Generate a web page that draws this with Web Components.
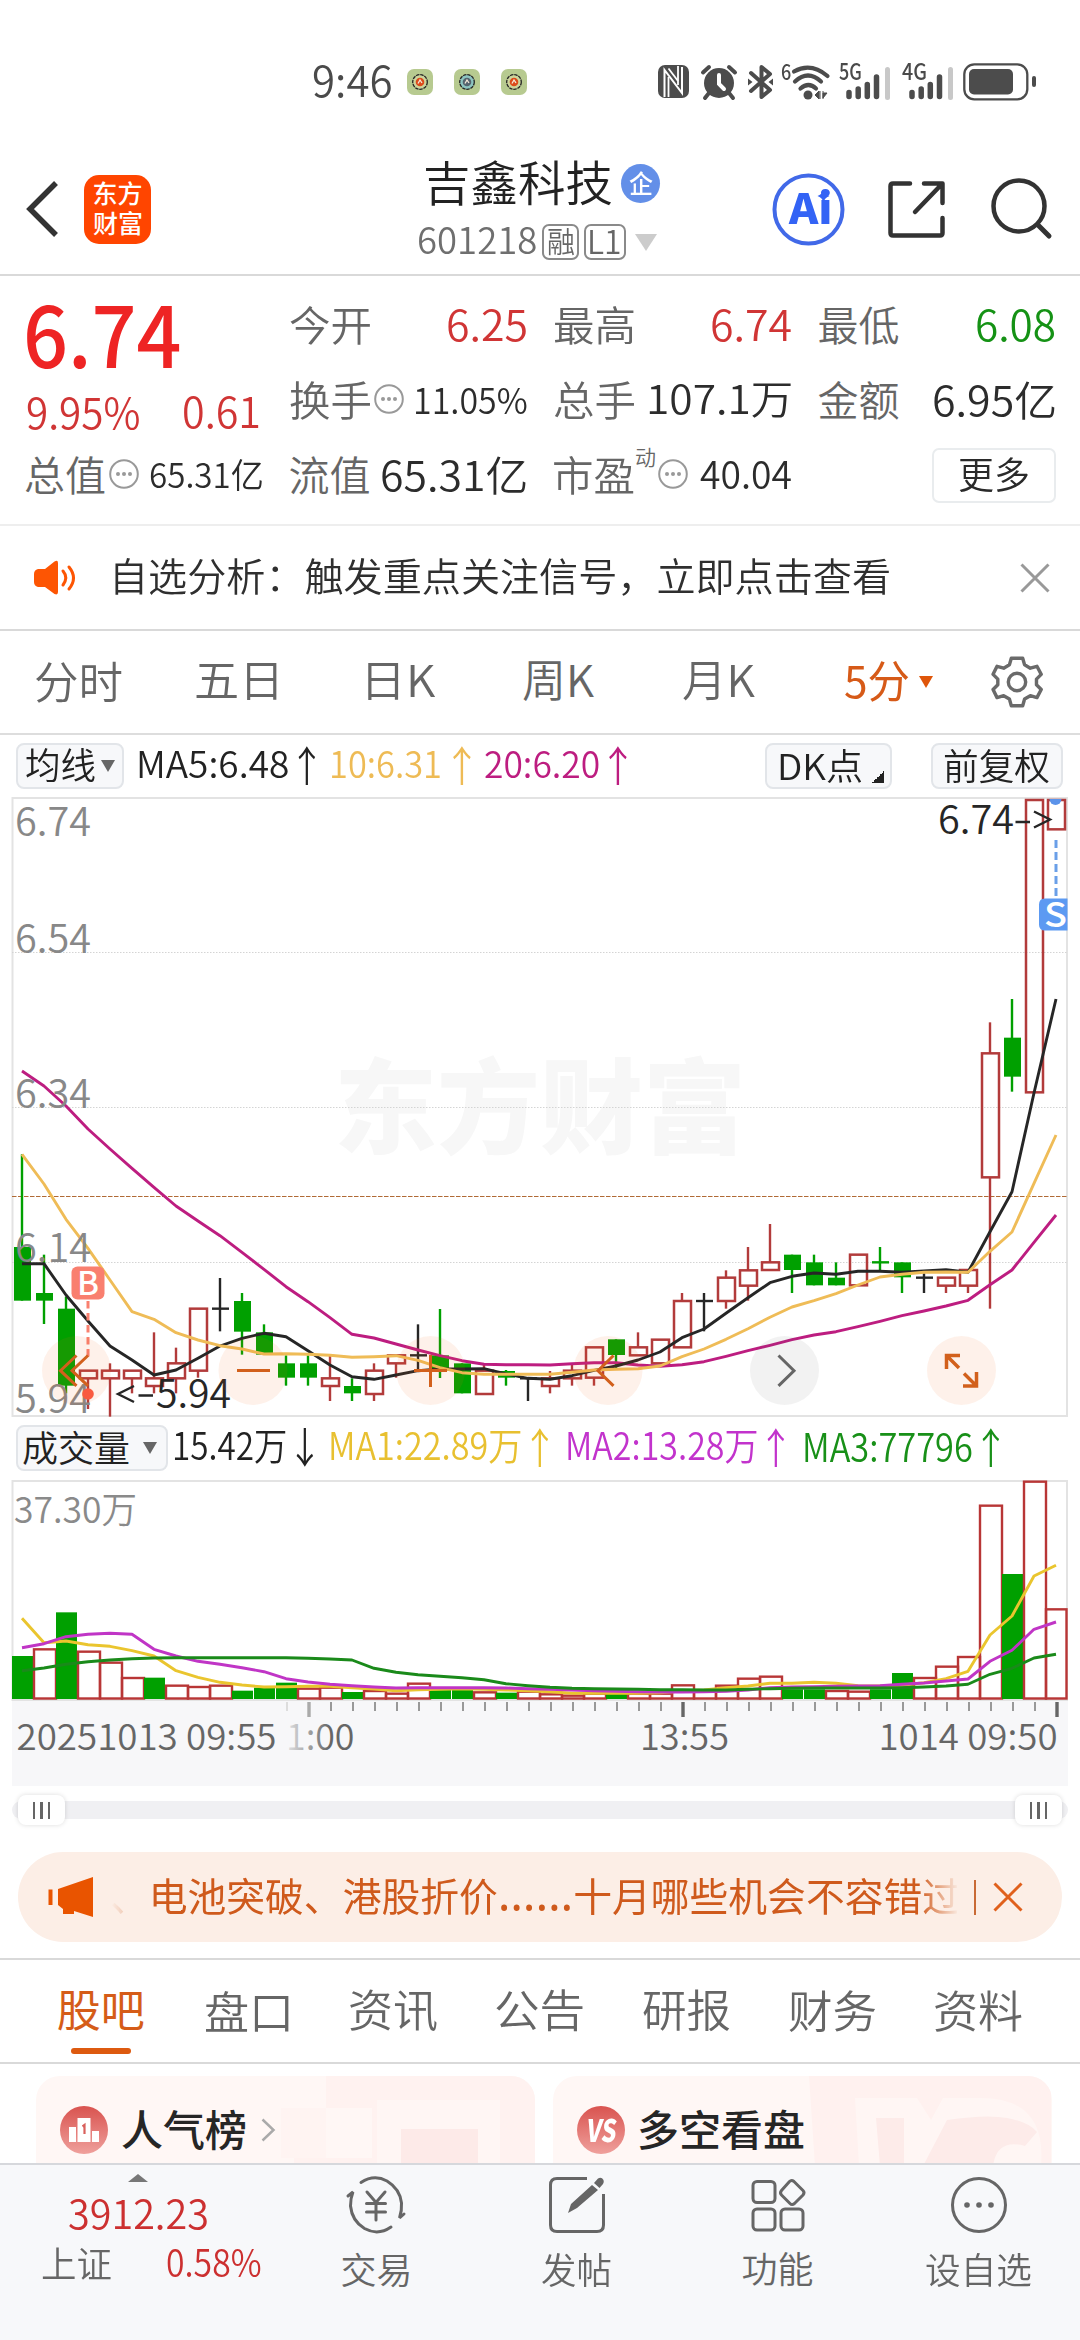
<!DOCTYPE html>
<html lang="zh-CN">
<head>
<meta charset="utf-8">
<title>吉鑫科技 601218</title>
<style>
html,body{margin:0;padding:0;background:#fff}
body{width:1080px;height:2340px;overflow:hidden;font-family:"Noto Sans CJK SC","Noto Sans",sans-serif;color:#2a2a2a}
</style>
</head>
<body>
<stock-app></stock-app>
<script>
const FAMILY = '"Noto Sans CJK SC","Noto Sans",sans-serif';
const pen = document.createElement('canvas').getContext('2d');
const define = (name, html, after) => customElements.define(name, class extends HTMLElement {
  connectedCallback() {
    if (this.shadowRoot) return;
    this.attachShadow({mode: 'open'}).innerHTML = typeof html === 'function' ? html(this) : html;
    if (after) after(this);
  }
});

/* Text whose box is exactly its ink: s = font size, w = ink width, b = weight */
define('fit-text', el => {
  const s = +el.getAttribute('s'), b = el.getAttribute('b') || 350, w = +el.getAttribute('w');
  const t = el.textContent;
  pen.font = `${b} ${s}px ${FAMILY}`;
  const m = pen.measureText(t);
  const ink = m.actualBoundingBoxLeft + m.actualBoundingBoxRight;
  const k = w ? w / ink : 1;
  const up = m.actualBoundingBoxAscent, down = m.actualBoundingBoxDescent;
  return `<style>
  :host{display:flow-root;flex:none;width:${(ink * k).toFixed(2)}px;height:${(up + down).toFixed(2)}px;white-space:nowrap}
  span{display:block;width:max-content;font:${b} ${s}px/${s}px ${FAMILY};transform-origin:0 0;transform:scaleX(${k.toFixed(4)});
  margin:${(up - s * .936).toFixed(2)}px 0 0 ${(m.actualBoundingBoxLeft * k).toFixed(2)}px}
  </style><span><slot></slot></span>`;
});

const T = (t, s, w, x = '') => `<fit-text s="${s}" w="${w}" ${x}>${t}</fit-text>`;
const ml = (n, c) => `style="margin-left:${n}px${c ? ';color:' + c : ''}"`;

const ICONS = {
  nfc: [32, 34, `<rect x="0" y="0" width="31" height="33" rx="7" fill="#4c4c4c"/><path d="M6.500 32V5l17.500 23V2" fill="none" stroke="#fff" stroke-width="2"/><path d="M10.500 32V12M20 20V1" stroke="#fff" stroke-width="1.800"/><path d="M10.500 3.500L20 16" stroke="#fff" stroke-width="1.800"/>`],
  alarm: [36, 34, `<circle cx="18" cy="18" r="15" fill="#4c4c4c"/><path d="M2 7.500l6-5.500M34 7.500l-6-5.500M8 28l-4 5M28 28l4 5" stroke="#4c4c4c" stroke-width="4" stroke-linecap="round"/><path d="M18 10v9l5 5" fill="none" stroke="#fff" stroke-width="4" stroke-linecap="round"/>`],
  bt: [26, 36, `<path d="M3 9l19 17-8.500 7V3L22 10 3 27" fill="none" stroke="#4c4c4c" stroke-width="4" stroke-linejoin="round" stroke-linecap="round"/><path d="M0 14.500l4.500 3.500L0 21.500zM25 14.500L20.500 18l4.500 3.500z" fill="#4c4c4c"/>`],
  wifi: [48, 36, `<g fill="none" stroke="#4c4c4c" stroke-width="4.200" stroke-linecap="round"><path d="M12 7.500Q29-2 45.500 12"/><path d="M13 17.500q13-12 26 0"/><path d="M18.500 24.500q8-7 15.500 0"/></g><circle cx="26" cy="31" r="4.500" fill="#4c4c4c"/><path d="M33 31l4-4v8zM38 27l0 8M41 27v8M45 29h-4l0 5z" fill="#4c4c4c" stroke="#4c4c4c"/>`],
  signal: [44, 26, `<g stroke-width="5.500" stroke-linecap="round" stroke="#4c4c4c"><path d="M3 18.500v4M12.200 15v7.500M21.300 10.500v12M30.500 3v19.500"/></g>`],
  battery: [74, 38, `<rect x="1.300" y="1.300" width="63" height="35" rx="10" fill="none" stroke="#4c4c4c" stroke-width="2.300"/><rect x="6" y="6" width="44" height="25.500" rx="5" fill="#4c4c4c"/><rect x="69" y="13" width="4" height="11" rx="2" fill="#4c4c4c"/>`],
  back: [34, 58, `<path d="M30 3L4 29l26 26" fill="none" stroke="#333" stroke-width="5.500"/>`],
  ai: [73, 73, `<rect x="43" y="13" width="17" height="15.500" fill="#fff"/><circle cx="36.500" cy="36.500" r="34" fill="none" stroke="#4169e8" stroke-width="4"/><path d="M51.500 17q1.500 4.500 6 6-4.500 1.500-6 6-1.500-4.500-6-6 4.500-1.500 6-6z" fill="#3363f5"/>`],
  share: [60, 60, `<g fill="none" stroke="#333" stroke-width="4.500" stroke-linecap="round" stroke-linejoin="round"><path d="M23 4.500H6Q3.500 4.500 3.500 7v47q0 2.500 2.500 2.500h47q2.500 0 2.500-2.500V39M37 4.500h18.500V24M54 6L28 33"/></g>`],
  search: [60, 62, `<circle cx="28" cy="28" r="25.500" fill="none" stroke="#333" stroke-width="4.500"/><path d="M47 47l11 11" stroke="#333" stroke-width="5" stroke-linecap="round"/>`],
  dots: [30, 30, `<circle cx="15" cy="15" r="13.800" fill="none" stroke="#999" stroke-width="2"/><g fill="#999"><circle cx="9" cy="15" r="2"/><circle cx="15" cy="15" r="2"/><circle cx="21" cy="15" r="2"/></g>`],
  speaker: [45, 36, `<path d="M4 9h7L20.500 1.500Q24-.5 24 3v29q0 3.500-3.500 2L11 27H4q-4-1-4-5v-8q0-4 4-5z" fill="#fd5503"/><path d="M29 11q5.500 6.500 0 14M35 7q9 11 0 22" fill="none" stroke="#fd5503" stroke-width="3" stroke-linecap="round"/>`],
  close: [30, 30, `<path d="M1.500 1.500l27 27M28.500 1.500l-27 27" stroke="currentColor" stroke-width="3"/>`],
  gear: [52, 54, `<path d="M20 2h12l2 7 6 3.500 7-2 4.500 8.500-5 5v6l5 5L47 43.500l-7-2L34 45l-2 7H20l-2-7-6-3.500-7 2L.8 35l5-5v-6l-5-5L5 10.500l7 2L18 9z" transform="translate(1.300 1.300) scale(.95)" fill="none" stroke="#6a6a6a" stroke-width="3.600" stroke-linejoin="round"/><circle cx="26" cy="27" r="8.700" fill="none" stroke="#6a6a6a" stroke-width="3.400"/>`],
  horn: [46, 40, `<path d="M10 12L45 0v40L26 34v3H15v-5l-5-4z" fill="#e95400"/><path d="M2.500 12.500V28" stroke="#e95400" stroke-width="4"/>`],
  chev: [15, 24, `<path d="M1.500 1.500L12.500 12 1.500 22.500" fill="none" stroke="#aaa" stroke-width="2.500"/>`],
  rank: [48, 48, `<defs><linearGradient id="g" x1="0" y1="0" x2="0" y2="1"><stop offset="0" stop-color="#d9534f"/><stop offset="1" stop-color="#efa09c"/></linearGradient></defs><circle cx="24" cy="24" r="24" fill="url(#g)"/><path d="M9 36V21h7v15zM17.500 36V12h13v24zM32 36V25h7v11z" fill="#fff"/><path d="M22.500 20.500l2-1.500v9" fill="none" stroke="#d9605c" stroke-width="2.200"/>`],
  vs: [48, 48, `<defs><linearGradient id="g" x1="0" y1="0" x2="0" y2="1"><stop offset="0" stop-color="#d9534f"/><stop offset="1" stop-color="#efa09c"/></linearGradient></defs><circle cx="24" cy="24" r="24" fill="url(#g)"/>`],
  trade: [66, 60, `<g fill="none" stroke="#666" stroke-width="3" stroke-linecap="round"><path d="M18 7.500Q31-1 44 6q13 8 14.500 22 .5 8-2 15l4.500-4M48 52q-13 9-26.500 1.500Q9 46 7.500 31q0-8 2.500-14l-5 4"/><path d="M24 17l9 10.500L42 17M23.500 28.500h19M23.500 37h19M33 28.500V45"/></g>`],
  post: [58, 58, `<path d="M39 2.500H9Q2.500 2.500 2.500 9v40Q2.500 55.500 9 55.500h40q6.500 0 6.500-6.500V18" fill="none" stroke="#666" stroke-width="3"/><path d="M20 37l3-9L44 9l6 5-21 18zM46 7l4-4.500q3.500-2 5.500 1.500.8 2-.5 4L51.500 12z" fill="#666"/>`],
  apps: [54, 54, `<g fill="none" stroke="#666" stroke-width="3"><rect x="2" y="3.500" width="22" height="21" rx="4"/><rect x="2" y="31" width="22" height="21" rx="4"/><rect x="30" y="31" width="22" height="21" rx="4"/><path d="M38.500 3.500q2-2 4.500 0l9 9q2 2 0 4.500l-8.500 8.500q-2.500 2-4.500 0L30.500 17q-2-2 0-4.500z"/></g>`],
  more: [58, 58, `<circle cx="29" cy="29" r="26.500" fill="none" stroke="#666" stroke-width="3"/><g fill="#666"><circle cx="17" cy="29" r="2.800"/><circle cx="29" cy="29" r="2.800"/><circle cx="41" cy="29" r="2.800"/></g>`],
};
define('ui-icon', el => {
  const [w, h, body] = ICONS[el.getAttribute('name')];
  return `<style>:host{display:block;flex:none;width:${w}px;height:${h}px}svg{display:block;overflow:visible}</style><svg width="${w}" height="${h}" viewBox="0 0 ${w} ${h}">${body}</svg>`;
});

define('notice-dot', el => `<style>
:host{display:grid;place-items:center;width:26px;height:26px;border-radius:7px;background:#b7ca90;margin-right:21px}
svg{display:block}</style><svg width="18" height="18" viewBox="0 0 18 18"><circle cx="9" cy="9" r="7.300" fill="${el.getAttribute('bg')}" stroke="#262626" stroke-width="1.300" stroke-dasharray="3.500 .8"/><circle cx="9" cy="9" r="4.300" fill="${el.getAttribute('c')}"/><path d="M7 10.500l2-3.500 2 3" fill="none" stroke="#f4e7d8" stroke-width="1.300"/></svg>`);

define('status-bar', `<style>
:host{display:flex;height:164px;align-items:center;padding-left:313px;box-sizing:border-box;color:#4a4a4a}
.dots{display:flex;margin-left:16px}
.sim{display:grid;width:50px;height:36px}
.sim>*{grid-area:1/1}
.sim ui-icon{align-self:end;margin-left:7px}
.bar{align-self:end;justify-self:end;width:5px;height:33px;border-radius:3px;background:#c8c8c8}
</style>
${T('9:46', 43, 78)}
<div class="dots"><notice-dot c="#dc4a1a" bg="#cdd49c"></notice-dot><notice-dot c="#54636e" bg="#8cc4c0"></notice-dot><notice-dot c="#dc4a1a" bg="#cdd49c"></notice-dot></div>
<ui-icon name="nfc" ${ml(110)}></ui-icon>
<ui-icon name="alarm" ${ml(11)}></ui-icon>
<ui-icon name="bt" ${ml(11)}></ui-icon>
<div class="sim" style="margin-left:8px;width:50px">${T('6', 22, 9, 'b="500"')}<ui-icon name="wifi" style="margin-left:0"></ui-icon></div>
<div class="sim" style="margin-left:7px">${T('5G', 23, 22, 'b="500"')}<ui-icon name="signal"></ui-icon><div class="bar"></div></div>
<div class="sim" style="margin-left:13px">${T('4G', 23, 24, 'b="500"')}<ui-icon name="signal"></ui-icon><div class="bar"></div></div>
<ui-icon name="battery" ${ml(11)}></ui-icon>`);

define('app-logo', `<style>
:host{display:flex;flex-direction:column;align-items:center;justify-content:center;gap:5px;width:67px;height:69px;border-radius:15px;background:#ff4500;color:#fff}
</style>${T('东方', 25, 48, 'b="500"')}${T('财富', 25, 49, 'b="500"')}`);

define('top-bar', `<style>
:host{display:flex;height:112px;align-items:flex-start;padding-left:26px;border-bottom:2px solid #d9d9d9;box-sizing:border-box}
.mid{display:flex;height:90px;align-items:center}
.row{display:flex;align-items:center}
.badge{display:grid;place-items:center;width:39px;height:39px;border-radius:50%;background:#638fe8;color:#fff;margin-left:9px}
.tag{display:grid;place-items:center;box-sizing:border-box;height:36px;border:2px solid #8a8a8a;border-radius:7px;color:#666}
.down{border:11px solid transparent;border-top:17px solid #ccc;border-bottom:0}
.ai{display:grid;place-items:center;color:#3363f5}
.ai>*{grid-area:1/1}
</style>
<div class="mid">
<ui-icon name="back"></ui-icon>
<app-logo style="margin-left:24px"></app-logo>
<div style="margin:2px 0 0 268px;width:241px">
<div class="row" style="margin-left:7px;height:46px">${T('吉鑫科技', 48, 186, 'style="color:#222"')}<div class="badge">${T('企', 25, 24, 'b="500"')}</div></div>
<div class="row" style="margin-top:18px;color:#6f6f6f">${T('601218', 37, 117)}
<div class="tag" style="width:37px;margin-left:6px">${T('融', 29, 26)}</div>
<div class="tag" style="width:42px;margin-left:5px">${T('L1', 32, 30)}</div><div class="down" style="margin-left:9px"></div></div>
</div>
<div class="ai" style="margin-left:112px">${T('Ai', 42, 42, 'b="900" style="margin:-4px 0 0 0"')}<ui-icon name="ai"></ui-icon></div>
<ui-icon name="share" ${ml(42)}></ui-icon>
<ui-icon name="search" ${ml(44)}></ui-icon>
</div>`);

define('quote-cell', el => {
  const a = n => el.getAttribute(n);
  return `<style>
:host{display:flex;align-items:center;height:75px}
.sup{align-self:flex-start;margin:10px 0 0 2px}
fit-text.l,.sup{color:#666}
</style>${T(a('label'), 41, a('lw') || 80, 'class="l"')}${a('sup') ? `<div class="sup">${T(a('sup'), 21, 19)}</div>` : ''}
${a('dots') ? `<ui-icon name="dots" style="margin:-4px 0 0 ${a('dots')}px"></ui-icon>` : ''}
${T(a('value'), a('s') || 42, a('vw'), `style="margin-left:auto;margin-top:1px;color:${a('c') || '#2c2c2c'}"`)}`;
});

define('quote-panel', `<style>
:host{display:grid;grid-template-columns:237px 237px 237px 237px;column-gap:27.500px;height:250px;padding:12px 0 0 25px;box-sizing:border-box;border-bottom:2px solid #eee;align-content:start}
.price{grid-row:1/3;height:150px;padding:20px 0 0 2px;box-sizing:border-box}
.chg{display:flex;justify-content:space-between;width:232px;margin-top:27px;color:#d03535}
.more{display:grid;place-items:center;justify-self:end;align-self:center;width:124px;height:55px;box-sizing:border-box;border:2px solid #e9ecee;border-radius:7px}
</style>
<div class="price">${T('6.74', 84, 153, 'b="500" style="color:#ee2424"')}<div class="chg">${T('9.95%', 42, 112)}${T('0.61', 42, 75)}</div></div>
<quote-cell label="今开" value="6.25" vw="78" c="#d03535"></quote-cell>
<quote-cell label="最高" value="6.74" vw="79" c="#d03535"></quote-cell>
<quote-cell label="最低" value="6.08" vw="78" c="#159215"></quote-cell>
<quote-cell label="换手" dots="4" value="11.05%" s="36" vw="111"></quote-cell>
<quote-cell label="总手" value="107.1万" s="40" vw="142"></quote-cell>
<quote-cell label="金额" value="6.95亿" s="41" vw="121"></quote-cell>
<quote-cell label="总值" dots="4" value="65.31亿" s="34" vw="112"></quote-cell>
<quote-cell label="流值" value="65.31亿" s="41" vw="144"></quote-cell>
<quote-cell label="市盈" sup="动" dots="3" value="40.04" s="38" vw="91"></quote-cell>
<div class="more">${T('更多', 37, 69)}</div>`);

define('notice-row', `<style>
:host{display:flex;height:105px;align-items:center;padding-left:34px;box-sizing:border-box;border-bottom:2px solid #d9d9d9}
</style><ui-icon name="speaker"></ui-icon>${T('自选分析：触发重点关注信号，立即点击查看', 39, 774, ml(36, '#2f2f2f'))}
<ui-icon name="close" ${ml(131, '#999')}></ui-icon>`);

define('period-tabs', `<style>
:host{display:flex;height:104px;align-items:center;padding-left:36px;box-sizing:border-box;border-bottom:2px solid #ddd;color:#666}
.tri{border:7.500px solid transparent;border-top:12px solid #df560a;border-bottom:0;margin-left:10px}
</style>${T('分时', 44, 86)}${T('五日', 44, 81, ml(74))}${T('日K', 44, 68, ml(90))}${T('周K', 44, 71, ml(88))}${T('月K', 44, 72, ml(89))}
${T('5分', 44, 64, 'b="400" ' + ml(90, '#d65a18'))}<div class="tri"></div><ui-icon name="gear" ${ml(58)}></ui-icon>`);

define('pill-btn', `<style>
:host{display:flex;align-items:center;flex:none;box-sizing:border-box;height:46px;border:2px solid #e2e5e9;border-radius:8px;background:#f7f8fa;color:#222}
</style><slot></slot>`);

const TRI = (m, c = '#666') => `<i style="border:7px solid transparent;border-top:12px solid ${c};border-bottom:0;margin-left:${m}px"></i>`;
define('ma-row', `<style>
:host{display:flex;height:61px;align-items:center;padding:0 0 0 16px;box-sizing:border-box;color:#222}
.corner{width:12px;height:12px;background:linear-gradient(135deg,transparent 50%,#222 50%);margin:22px 0 0 10px}
</style>
<pill-btn style="width:108px;padding-left:8px">${T('均线', 36, 69)}${TRI(6)}</pill-btn>
${T('MA5:6.48', 37, 149, ml(15))}${T('↑', 42, 17, ml(10))}
${T('10:6.31', 37, 108, ml(17, '#eebb55'))}${T('↑', 42, 18, ml(13, '#eebb55'))}
${T('20:6.20', 37, 114, ml(14, '#bd1d80'))}${T('↑', 42, 18, ml(10, '#bd1d80'))}
<pill-btn style="width:127px;padding-left:13px;margin-left:138px">${T('DK点', 36, 82)}<div class="corner"></div></pill-btn>
<pill-btn style="width:132px;padding-left:11px;margin-left:39px">${T('前复权', 36, 105)}</pill-btn>`);

define('vol-row', `<style>
:host{display:flex;height:62px;align-items:center;padding:0 0 2px 16px;box-sizing:border-box;color:#222}
</style>
<pill-btn style="width:152px;padding-left:5px">${T('成交量', 36, 106)}${TRI(14)}</pill-btn>
${T('15.42万', 38, 111, ml(7))}${T('↓', 42, 17, ml(10))}
${T('MA1:22.89万', 38, 190, ml(18, '#e8c030'))}${T('↑', 42, 17, ml(10, '#e8c030'))}
${T('MA2:13.28万', 38, 189, ml(20, '#c233cc'))}${T('↑', 42, 17, ml(10, '#c233cc'))}
${T('MA3:77796', 39, 167, ml(21, '#189018'))}${T('↑', 42, 17, ml(10, '#189018'))}`);

/* kind, body top, body bottom, wick top, wick bottom; y = 1110 + v / 3 */
const K = [
['g',411,572,133,572],['g',549,572,434,642],['g',596,827,560,850],['r',782,805,782,897],['r',782,805,760,920],['r',782,805,782,850],
['r',805,828,667,850],['r',760,805,713,850],['r',596,782,596,803],['b',596,596,504,664],['g',573,665,549,734],['g',667,734,643,734],
['g',760,803,736,827],['g',760,803,736,827],['r',805,828,738,873],['g',828,850,805,873],['r',782,852,760,873],['r',736,760,736,803],
['b',736,736,643,782],['g',736,780,597,804],['g',760,850,760,850],['r',782,852,765,852],['g',783,803,780,827],['b',805,805,805,873],
['r',805,828,783,850],['r',782,805,760,827],['r',712,803,712,827],['g',688,735,688,774],['r',712,736,667,736],['r',689,760,689,760],
['r',573,712,549,712],['b',573,573,549,664],['r',503,573,481,596],['r',481,527,411,572],['r',457,480,342,480],['g',434,480,434,549],
['g',457,526,434,526],['g',503,526,457,526],['r',434,526,434,526],['g',457,457,411,482],['g',457,502,457,549],['b',503,503,490,549],
['r',503,527,503,549],['r',480,527,480,549],['r',-170,202,-263,596],['g',-217,-100,-333,-55],['r',-930,-53,-930,-53],['r',-930,-842,-930,-842]];
const M5=[461,461,555,633,708,750,795,780,745,708,685,670,680,722,765,800,808,795,782,777,777,776,792,805,808,797,781,768,750,726,683,657,610,563,518,499,489,493,484,484,487,483,479,487,365,245,-51,-333];
const M10=[133,222,328,415,510,605,628,668,690,707,717,732,731,733,736,742,740,737,751,773,788,793,793,793,793,787,780,778,776,768,740,717,688,656,622,591,572,551,525,501,493,487,486,487,424,366,220,75];
const M20=[-117,-72,-12,57,117,175,232,288,333,377,427,478,530,575,623,673,684,702,720,737,752,763,764,764,765,761,758,758,765,769,764,755,739,722,706,689,675,665,650,634,617,603,588,571,524,480,397,315];
const X = i => 22 + 22 * i;
const line = (a, base, c) => `<polyline points="${a.map((v, i) => v === null ? '' : X(i) + ',' + (base + v / 3).toFixed(1)).join(' ')}" fill="none" stroke="${c}" stroke-width="2.900" stroke-linejoin="round"/>`;
const tx = (t, x, y, w, s, c, more = '') => `<text x="${x}" y="${y}" textLength="${w}" lengthAdjust="spacingAndGlyphs" font-size="${s}" fill="${c}" ${more}>${t}</text>`;
const CLR = {g: '#00a000', r: '#b23b3b', b: '#262626'};
const SVGCSS = `:host{display:block}svg{display:block;font-family:${FAMILY};font-weight:350}`;

define('k-chart', () => {
  const Y = v => 1110 + v / 3;
  let c = '';
  K.forEach(([k, t, b, wt, wb], i) => {
    const x = X(i), col = CLR[k];
    if (k === 'r') {
      if (wt < t) c += `<path d="M${x} ${Y(wt)}V${Y(t)}" stroke="${col}" stroke-width="2.400"/>`;
      if (wb > b) c += `<path d="M${x} ${Y(b)}V${Y(wb)}" stroke="${col}" stroke-width="2.400"/>`;
      c += `<rect x="${x - 8}" y="${Y(t)}" width="17" height="${(b - t) / 3}" fill="none" stroke="${col}" stroke-width="2.500"/>`;
    } else {
      c += `<path d="M${x} ${Y(wt)}V${Y(wb)}" stroke="${col}" stroke-width="2.400"/>`;
      c += t === b ? `<path d="M${x - 8} ${Y(t)}h17" stroke="${col}" stroke-width="2.400"/>` : `<rect x="${x - 8}" y="${Y(t)}" width="17" height="${(b - t) / 3}" fill="${col}"/>`;
    }
  });
  const grid = [952.5, 1107.5, 1262.5].map(y => `<path d="M12 ${y}H1067" stroke="#d4d4d4" stroke-width="1" stroke-dasharray="1.500 1.500"/>`).join('');
  const lab = [['6.74', 836], ['6.54', 952.7], ['6.34', 1107.7], ['6.14', 1262], ['5.94', 1412.5]].map(([t, y]) => tx(t, 15, y, 76, 39, '#888')).join('');
  const btn = [76.5, 253, 430.5, 608, 784.5, 961.5].map((x, i) => `<circle cx="${x}" cy="1370.500" r="34.500" fill="${i === 4 ? 'rgba(90,90,90,.08)' : 'rgba(240,95,20,.09)'}"/>`).join('');
  return `<style>${SVGCSS}</style><svg width="1080" height="622" viewBox="0 796 1080 622">
  <g font-weight="900">${tx('东方财富', 334, 1146, 412, 103, '#f7f7f7')}</g>
  <rect x="12.500" y="798" width="1054.500" height="618" fill="none" stroke="#e3e3e3" stroke-width="2"/>
  ${grid}<path d="M12 1196.500H1067" stroke="#b06a35" stroke-width="1.200" stroke-dasharray="4.500 1.500"/>
  ${c}${line(M20, 1110, '#bd1d80')}${line(M5, 1110, '#262626')}${line(M10, 1110, '#efbc57')}${lab}
  ${tx('6.74', 938, 833.5, 76, 39, '#262626')}<path d="M1015.500 822h14.500M1034 811.500l16 8-16 8" fill="none" stroke="#262626" stroke-width="2.400"/>
  ${tx('5.94', 156, 1407.500, 75, 39, '#262626')}<path d="M138.500 1395.500h14.500M134 1386l-16 8 16 8" fill="none" stroke="#262626" stroke-width="2.400"/>
  <path d="M88 1301v57" stroke="#f9806f" stroke-width="3" stroke-dasharray="7.500 4.500"/><circle cx="88" cy="1394" r="5.800" fill="#fa5a45"/>
  <rect x="71.500" y="1266.500" width="33" height="33" rx="6" fill="#f97f6f"/>
  <g font-weight="500">${tx('B', 77, 1294.5, 22, 33, '#fff')}</g>
  <path d="M1049.500 799a6 6 0 0 0 12 0z" fill="#5b93ea"/><path d="M1056 840v57" stroke="#6a9fe8" stroke-width="3" stroke-dasharray="8 4"/>
  <path d="M1067.500 898.500H1045q-6 0-6 6v20q0 6 6 6h22.500z" fill="#5c9af2"/>
  <g font-weight="500">${tx('S', 1044, 926.5, 23, 34, '#fff')}</g>
  ${btn}
  <g fill="none" stroke="#d2601c" stroke-width="3"><path d="M76.500 1355.500l-16 15.200 16 15.200M88 1355.500l-16 15.200 16 15.200M237 1370.500h33M414 1370.500h33M430.500 1355v32M613.500 1355.500l-15.500 15.200 15.500 15.200"/>
  <path d="M946.500 1369v-13.500h13.500M947 1356l12 12M976.500 1372v14H963M976 1385.500l-12-12" stroke-width="3.500"/></g>
  <path d="M778.500 1355.500l15.500 15.200-15.500 15.200" fill="none" stroke="#666" stroke-width="3"/>
  </svg>`;
});

const V = 'g708 r685 g577 r692 r725 r771 g773 r794 r798 r794 g812 g803 g788 r803 r800 g816 r810 r818 r788 g808 g810 r814 g818 r812 r820 r824 r818 g822 r818 r818 r793 r812 r794 r773 r767 g808 g808 r810 r812 g808 g759 r771 r737 r708 r254 g462 r182 r565'.split(' ').map(s => [s[0], +s.slice(1)]);
const V5=[595,668,663,674,679,692,708,752,772,787,795,801,800,799,799,803,807,812,809,808,806,808,810,812,815,820,820,819,820,818,813,810,803,798,790,790,787,790,797,798,796,788,776,754,645,588,468,436];
const V10=[683,671,650,643,640,643,688,708,724,733,743,755,776,786,793,797,801,804,803,803,803,803,804,806,808,810,812,814,815,816,816,815,814,810,803,801,800,799,798,797,793,789,783,777,724,691,628,606];
const V20=[752,744,733,725,720,716,714,713,713,713,713,713,713,715,717,720,745,757,764,769,773,779,791,797,802,805,806,807,808,809,809,810,810,808,806,805,804,804,804,804,803,801,798,793,763,745,714,703];
define('vol-chart', () => {
  const Y = v => 1420 + v / 3;
  let c = '', ticks = '';
  V.forEach(([k, t], i) => {
    const x = X(i);
    c += k === 'g' ? `<rect x="${x - 10}" y="${Y(t)}" width="21" height="${1699 - Y(t)}" fill="#00a000"/>`
      : `<rect x="${x - 10}" y="${Y(t) + 1}" width="${i === 47 ? 20.5 : 22}" height="${1697.5 - Y(t)}" fill="none" stroke="#b83636" stroke-width="2.400"/>`;
    if (i > 11) {
      const big = i === 13 || i === 30 || i === 47;
      ticks += `<path d="M${x + 1} 1702v${big ? 15 : 9}" stroke="${i === 12 ? '#ddd' : i === 13 ? '#aaa' : big ? '#666' : '#999'}" stroke-width="${big ? 3.4 : 2}"/>`;
    }
  });
  return `<style>${SVGCSS}</style><svg width="1080" height="306" viewBox="0 1480 1080 306">
  <defs><linearGradient id="fade" gradientUnits="userSpaceOnUse" x1="284" x2="330" y1="0" y2="0"><stop offset="0" stop-color="#666" stop-opacity=".1"/><stop offset="1" stop-color="#666"/></linearGradient></defs>
  <rect x="12" y="1701" width="1056" height="86" fill="#f7f7f9"/>
  <rect x="12.500" y="1481" width="1054.500" height="219" fill="#fff" stroke="#e3e3e3" stroke-width="2"/>
  ${c}${line(V5, 1420, '#eac52e')}${line(V10, 1420, '#c035c6')}${line(V20, 1420, '#1a8a1a')}
  ${tx('37.30万', 14, 1523, 123, 36, '#8a8a8a')}${ticks}
  ${tx('20251013 09:55', 16.5, 1750, 260, 36, '#666')}${tx('1:00', 286, 1750, 68.5, 36, 'url(#fade)')}
  ${tx('13:55', 640, 1750, 89, 36, '#666')}${tx('1014 09:50', 878.5, 1750, 179, 36, '#666')}
  </svg>`;
});

define('range-slider', `<style>
:host{display:flex;height:48px;align-items:center;justify-content:center}
.track{display:flex;align-items:center;justify-content:space-between;width:1056px;height:18px;border-radius:9px;background:#f0f0f3;padding:0 6px;box-sizing:border-box}
.h{display:flex;align-items:center;justify-content:center;gap:5px;width:47px;height:30px;border-radius:8px;background:#fff;box-shadow:0 0 5px rgba(0,0,0,.14)}
.h i{width:2.500px;height:17px;background:#666}
</style><div class="track"><div class="h"><i></i><i></i><i></i></div><div class="h"><i></i><i></i><i></i></div></div>`);

define('promo-pill', `<style>
:host{display:flex;align-items:center;height:90px;margin:18px 18px 0;border-radius:45px;background:#fceee6;padding-left:30px;box-sizing:border-box;color:#cf5a1c}
.clip{margin-left:17px;width:846px;height:50px;display:flex;align-items:center;overflow:hidden;-webkit-mask:linear-gradient(90deg,transparent 0,rgba(0,0,0,.35) 20px,#000 38px,#000 808px,rgba(0,0,0,.05) 100%);mask:linear-gradient(90deg,transparent 0,rgba(0,0,0,.35) 20px,#000 38px,#000 808px,rgba(0,0,0,.05) 100%)}
.low{font-family:"Noto Sans";font-weight:400;font-size:48px;line-height:0}
.bar{width:2px;height:35px;background:#c96a35;margin-left:17px}
</style><ui-icon name="horn"></ui-icon><div class="clip">${T('、电池突破、港股折价<span class="low">……</span>十月哪些机会不容错过', 39, 850, 'b="400" ' + ml(1))}</div><div class="bar"></div><ui-icon name="close" ${ml(17, '#e0601c')}></ui-icon>`);

define('section-tabs', `<style>
:host{display:grid;grid-template-columns:repeat(7,146.400px);height:106px;margin-top:16px;padding-left:27.500px;box-sizing:border-box;border-top:2px solid #d9d9d9;border-bottom:2px solid #d9d9d9;color:#666}
div{display:flex;flex-direction:column;align-items:center;justify-content:center;gap:17px}
.on{color:#d55c18;padding-top:23px}
i{width:60px;height:6px;border-radius:3px;background:#dd5a10}
</style><div class="on">${T('股吧', 44, 86, 'b="400"')}<i></i></div>${['盘口', '资讯', '公告', '研报', '财务', '资料'].map((t, i) => `<div>${T(t, 44, i ? 87 : 84)}</div>`).join('')}`);

define('feature-card', el => {
  const vs = el.getAttribute('icon') === 'vs';
  const art = vs
    ? `<path d="M256 0H498V90H262z" fill="#fff1ef"/><path d="M302 22h62l14 22 12-22h34q70-2 64 68H306z" fill="#fff6f4"/><path d="M323 42h28v48h-24zM370 90l24-46q40-6 60-2 22 4 30 14l-12 14q-28-8-32 20z" fill="#fdebe9"/>`
    : `<path d="M290 0H499V90H258V82h78V32h-46z" fill="#fff2f0"/><path d="M245 32h45v50h-45z" fill="#fff4f2"/><path d="M341 24h123v66H341z" fill="#fff6f4"/><path d="M365 53h77v37h-77z" fill="#fdeae8"/>`;
  return `<style>
:host{display:grid;width:498.500px;height:140px;border-radius:24px;background:#fff7f5;overflow:hidden}
:host>*{grid-area:1/1}svg{display:block}
.row{display:flex;align-items:center;height:108px;padding-left:24px;color:#262626}
.ic{display:grid;place-items:center;color:#fff}.ic>*{grid-area:1/1}
</style><svg width="499" height="140" viewBox="0 0 499 140">${art}</svg>
<div class="row"><div class="ic"><ui-icon name="${el.getAttribute('icon')}"></ui-icon>${vs ? T('VS', 31, 30, 'b="900" style="transform:skewX(-8deg)"') : ''}</div>
${T(el.getAttribute('label'), 42, el.getAttribute('w'), 'b="500" ' + ml(14))}${vs ? '' : `<ui-icon name="chev" ${ml(16)}></ui-icon>`}</div>`;
});

define('card-row', `<style>
:host{display:flex;gap:18.500px;height:99px;padding:12px 0 0 36px;box-sizing:border-box;overflow:hidden}
</style><feature-card icon="rank" label="人气榜" w="123"></feature-card><feature-card icon="vs" label="多空看盘" w="165"></feature-card>`);

define('nav-item', el => `<style>
:host{display:flex;flex-direction:column;align-items:center;width:201px;color:#666}
.i{display:grid;place-items:center;height:79px}
</style><div class="i"><ui-icon name="${el.getAttribute('icon')}"></ui-icon></div>${T(el.getAttribute('label'), 36, el.getAttribute('w'), 'style="margin-top:8px"')}`);

define('bottom-bar', `<style>
:host{display:flex;height:177px;padding-left:36px;border-top:2px solid #d6d8dc;box-sizing:border-box;background:#f7f8fa;color:#666}
.idx{display:flex;flex-direction:column;align-items:center;width:204px;margin-right:35px}
.tri{border:10.500px solid transparent;border-bottom:8px solid #777;border-top:0;margin:9px 0 18px 0}
.r{display:flex;align-items:center;gap:56px;margin-top:17px}
</style><div class="idx"><div class="tri"></div>${T('3912.23', 40, 138, 'style="color:#cc3030"')}<div class="r" style="margin-left:26px">${T('上证', 36, 69)}${T('0.58%', 38, 94, 'style="color:#cc3030"')}</div></div>
<nav-item icon="trade" label="交易" w="68"></nav-item><nav-item icon="post" label="发帖" w="69"></nav-item><nav-item icon="apps" label="功能" w="70"></nav-item><nav-item icon="more" label="设自选" w="105"></nav-item>`);

define('stock-app', `<style>:host{display:flex;flex-direction:column;width:1080px;height:2340px;background:#fff;overflow:hidden}:host>*{flex-shrink:0}</style>
<status-bar></status-bar><top-bar></top-bar><quote-panel></quote-panel><notice-row></notice-row><period-tabs></period-tabs>
<ma-row></ma-row><k-chart></k-chart><vol-row></vol-row><vol-chart></vol-chart><range-slider></range-slider>
<promo-pill></promo-pill><section-tabs></section-tabs><card-row></card-row><bottom-bar></bottom-bar>`);
</script>
</body>
</html>
